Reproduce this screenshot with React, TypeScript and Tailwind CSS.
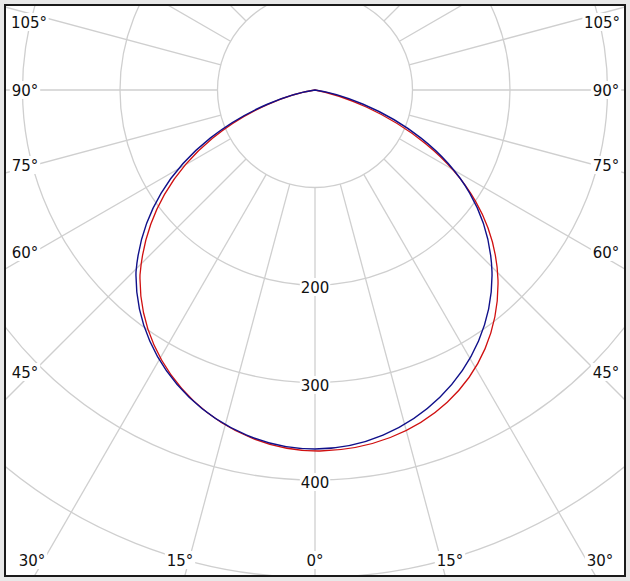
const CX = 315
const CY = 90
const STEP = 97.5

const sideLabels = [
  { t: '105°', y: 22 },
  { t: '90°', y: 90 },
  { t: '75°', y: 165 },
  { t: '60°', y: 252 },
  { t: '45°', y: 372 },
]

const bottomLabels = [
  { t: '30°', x: 32 },
  { t: '15°', x: 180 },
  { t: '0°', x: 315 },
  { t: '15°', x: 450 },
  { t: '30°', x: 600 },
]

function Label({ x, y, t }: { x: number; y: number; t: string }) {
  const w = t.length * 8.8 + 4
  return (
    <g>
      <rect x={x - w / 2} y={y - 9} width={w} height={18} fill="white" />
      <text x={x} y={y + 5.5} textAnchor="middle" fontSize={15} fill="#111">
        {t}
      </text>
    </g>
  )
}

export default function App() {
  const angles = Array.from({ length: 24 }, (_, i) => i * 15)
  const rings = [1, 2, 3, 4, 5, 6, 7]
  return (
    <div className="w-[630px] h-[581px] bg-[#e8e8e8] p-1" style={{ fontFamily: 'Tahoma, "DejaVu Sans", sans-serif' }}>
      <div className="w-full h-full border-2 border-[#1a1a1a] bg-white overflow-hidden">
        <svg width={618} height={570} viewBox="6 6 618 570" className="block">
          {rings.map((r) => (
            <circle key={r} cx={CX} cy={CY} r={r * STEP} fill="none" stroke="#cfcfcf" strokeWidth={1.3} />
          ))}
          {angles.map((a) => {
            const rad = (a * Math.PI) / 180
            const dx = Math.sin(rad)
            const dy = Math.cos(rad)
            return (
              <line
                key={a}
                x1={CX + dx * STEP}
                y1={CY + dy * STEP}
                x2={CX + dx * 1000}
                y2={CY + dy * 1000}
                stroke="#cfcfcf"
                strokeWidth={1.3}
              />
            )
          })}
          <path
            d="M315,90 C265,97 150,150 140,275 C138,375 225,452 320,451 C420,449 500,380 498,280 C494,160 370,100 315,90 Z"
            fill="none"
            stroke="#d01010"
            strokeWidth={1.3}
          />
          <path
            d="M315,90 C265,97 146,150 136,272 C134,370 220,449 315,449 C410,449 494,370 492,272 C488,150 365,97 315,90 Z"
            fill="none"
            stroke="#10108a"
            strokeWidth={1.4}
          />
          {sideLabels.map((l) => (
            <g key={l.t}>
              <Label x={l.t.length > 3 ? 29 : 25} y={l.y} t={l.t} />
              <Label x={l.t.length > 3 ? 602 : 606} y={l.y} t={l.t} />
            </g>
          ))}
          {bottomLabels.map((l, i) => (
            <Label key={i} x={l.x} y={560} t={l.t} />
          ))}
          <Label x={315} y={287} t="200" />
          <Label x={315} y={385} t="300" />
          <Label x={315} y={482} t="400" />
        </svg>
      </div>
    </div>
  )
}
